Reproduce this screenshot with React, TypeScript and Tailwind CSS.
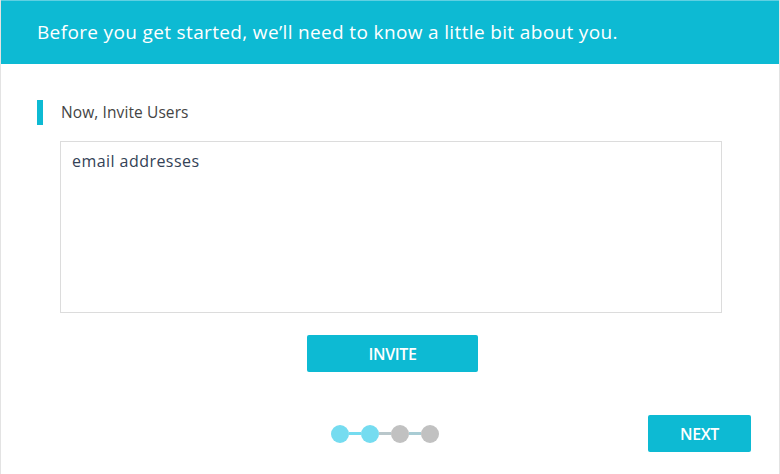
import { useState } from 'react'

const steps = [true, true, false, false]

export default function App() {
  const [emails, setEmails] = useState('')

  return (
    <div className="w-[780px] h-[474px] bg-white border-x border-[#e3e3e3] flex flex-col font-['Open_Sans',sans-serif]">
      {/* cabecera */}
      <div className="h-[64px] shrink-0 bg-[#0dbad3] border-t border-[#5fd0e2] flex items-center px-[36px]">
        <h1 className="text-[19px] text-white tracking-[0.35px]">
          Before you get started, we’ll need to know a little bit about you.
        </h1>
      </div>

      <div className="flex items-center mt-[36px] pl-[36px] h-[25px]">
        <span className="w-[6px] h-[25px] bg-[#0dbad3]" />
        <span className="ml-[18px] text-[15.5px] text-[#444] tracking-[0.1px]">Now, Invite Users</span>
      </div>

      <div className="pl-[59px] pr-[57px] mt-[16px]">
        <textarea
          value={emails}
          onChange={(e) => setEmails(e.target.value)}
          placeholder="email addresses"
          className="block w-full h-[172px] resize-none border border-[#dcdcdc] px-[11px] py-[7px] text-[16px] tracking-[0.45px] text-[#344256] placeholder:text-[#344256] outline-none"
        />
      </div>

      <div className="flex justify-center mt-[22px] pl-[5px]">
        <button className="w-[171px] h-[37px] rounded-[2px] bg-[#0dbad3] text-white text-[16px] font-semibold tracking-[-0.4px]">
          INVITE
        </button>
      </div>

      <div className="flex items-center mt-[43px] pl-[330px] pr-[28px]">
        <div className="flex items-center">
          {steps.map((on, i) => (
            <div key={i} className="flex items-center">
              {i > 0 && (
                <span
                  className={`w-[12px] h-[3px] ${i === 1 ? 'bg-[#75dcf0]' : i === 2 ? 'bg-[#b9c7cb]' : 'bg-[#a9ccd4]'}`}
                />
              )}
              <span className={`w-[18px] h-[18px] rounded-full ${on ? 'bg-[#75dcf0]' : 'bg-[#c1c1c1]'}`} />
            </div>
          ))}
        </div>
        <button className="ml-auto w-[103px] h-[37px] rounded-[2px] bg-[#0dbad3] text-white text-[16px] font-semibold tracking-[-0.4px]">
          NEXT
        </button>
      </div>
    </div>
  )
}
